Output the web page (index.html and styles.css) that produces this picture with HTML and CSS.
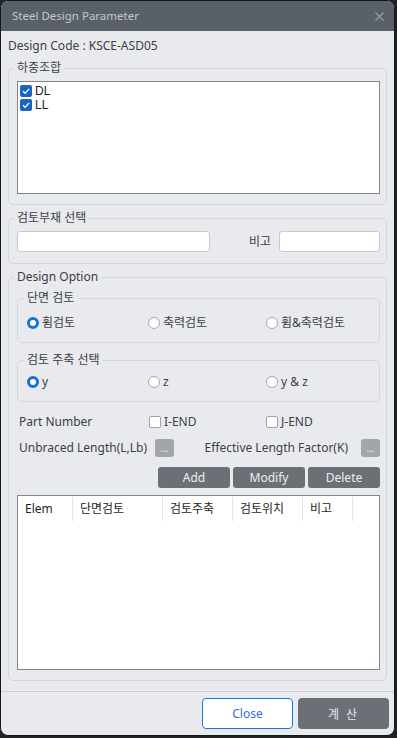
FILE: index.html
```html
<!DOCTYPE html>
<html lang="ko">
<head>
  <meta charset="UTF-8" />
  <meta name="viewport" content="width=device-width, initial-scale=1.0"/>
  <title>Steel Design Parameter</title>
  <link rel="stylesheet" href="styles.css">
</head>
<body>

  <div class="dialog">

    <div class="titlebar">
      <span class="title">Steel Design Parameter</span>
      <svg class="close-x" width="9" height="9" viewBox="0 0 9 9">
        <path d="M0.5 0.5L8.5 8.5M8.5 0.5L0.5 8.5" stroke="#9ba1a7" stroke-width="1.1" fill="none"/>
      </svg>
    </div>

    <div class="content">
      <div class="design-code">Design Code : KSCE-ASD05</div>

      <!-- load combinations -->
      <fieldset class="group">
        <legend>하중조합</legend>
        <div class="listbox">
          <div class="list-item">
            <span class="check on">
              <svg width="12" height="12" viewBox="0 0 12 12"><path d="M3 6.2L5.2 8.3L9.2 3.9" stroke="#fff" stroke-width="1.3" fill="none"/></svg>
            </span>
            DL
          </div>
          <div class="list-item">
            <span class="check on">
              <svg width="12" height="12" viewBox="0 0 12 12"><path d="M3 6.2L5.2 8.3L9.2 3.9" stroke="#fff" stroke-width="1.3" fill="none"/></svg>
            </span>
            LL
          </div>
        </div>
      </fieldset>

      <!-- member selection -->
      <fieldset class="group member-group">
        <legend>검토부재 선택</legend>
        <div class="member-row">
          <input class="text-input member-input" type="text">
          <span class="memo-label">비고</span>
          <input class="text-input memo-input" type="text">
        </div>
      </fieldset>

      <!-- design option -->
      <fieldset class="group option-group">
        <legend>Design Option</legend>

        <fieldset class="subgroup">
          <legend>단면 검토</legend>
          <div class="radio-row">
            <span class="radio-item"><span class="radio on"></span>휨검토</span>
            <span class="radio-item"><span class="radio"></span>축력검토</span>
            <span class="radio-item"><span class="radio"></span>휨&amp;축력검토</span>
          </div>
        </fieldset>

        <fieldset class="subgroup axis-group">
          <legend>검토 주축 선택</legend>
          <div class="radio-row">
            <span class="radio-item"><span class="radio on"></span>y</span>
            <span class="radio-item"><span class="radio"></span>z</span>
            <span class="radio-item"><span class="radio"></span>y &amp; z</span>
          </div>
        </fieldset>

        <div class="part-row">
          <span>Part Number</span>
          <span class="check-item"><span class="check"></span>I-END</span>
          <span class="check-item"><span class="check"></span>J-END</span>
        </div>

        <div class="length-row">
          <span>Unbraced Length(L,Lb)</span>
          <button class="dots-btn">...</button>
          <span class="k-label">Effective Length Factor(K)</span>
          <button class="dots-btn">...</button>
        </div>

        <div class="action-row">
          <button class="gray-btn">Add</button>
          <button class="gray-btn">Modify</button>
          <button class="gray-btn">Delete</button>
        </div>

        <div class="result-table">
          <div class="table-head">
            <span>Elem</span>
            <span>단면검토</span>
            <span>검토주축</span>
            <span>검토위치</span>
            <span>비고</span>
          </div>
        </div>
      </fieldset>
    </div>

    <div class="footer">
      <button class="close-btn">Close</button>
      <button class="calc-btn">계 산</button>
    </div>

  </div>

</body>
</html>
```

FILE: styles.css
```css
body {
  margin: 0;
  background-color: #1f2327;
  font-family: "Noto Sans", "Noto Sans CJK KR", sans-serif;
  font-size: 12px;
  line-height: 16px;
  color: #3b4047;
}

.dialog {
  width: 393px;
  height: 734px;
  border: 1px solid #15181b;
  border-radius: 8px;
  background-color: #e9eaed;
  overflow: hidden;
  display: flex;
  flex-direction: column;
}

.titlebar {
  height: 30px;
  flex-shrink: 0;
  background-color: #5a6068;
  display: flex;
  align-items: center;
  justify-content: space-between;
  padding: 0 10px 0 11px;
}

.title {
  color: #c3c7cc;
  font-size: 11.5px;
}

.content {
  padding: 7px 7px 0;
  display: flex;
  flex-direction: column;
}

.design-code {
  line-height: 16px;
  margin-bottom: 6px;
}

fieldset {
  margin: 0;
  min-width: 0;
  border: 1px solid #d3d6da;
  border-radius: 5px;
}

legend {
  line-height: 16px;
  padding: 0 3px;
  margin-left: -3px;
}

.group {
  padding: 5px 6px 10px 8px;
  margin-bottom: 5px;
}

.member-group {
  padding-bottom: 11px;
}

.listbox {
  box-sizing: border-box;
  height: 113px;
  background: #fff;
  border: 1px solid #80868d;
  padding: 2px;
}

.list-item {
  height: 14px;
  line-height: 14px;
  display: flex;
  align-items: center;
  gap: 3px;
  font-family: "Liberation Sans", sans-serif;
  color: #1d1f22;
}

.check {
  width: 10px;
  height: 10px;
  border: 1px solid #9da2a8;
  border-radius: 2px;
  background: #fff;
  display: inline-flex;
}

.check.on {
  width: 12px;
  height: 12px;
  border: none;
  background: #1b64c4;
}

.member-row {
  display: flex;
  align-items: center;
}

.text-input {
  box-sizing: border-box;
  height: 21px;
  border: 1px solid #c6cacf;
  border-radius: 3px;
  background: #fff;
  margin: 0;
}

.member-input {
  width: 193px;
}

.memo-label {
  margin-left: auto;
  margin-right: 8px;
}

.memo-input {
  width: 101px;
}

.option-group {
  padding-bottom: 10px;
  margin-bottom: 0;
}

.subgroup {
  padding: 9px 6px 11px 9px;
}

.axis-group {
  margin-top: 9px;
  padding-top: 6px;
}

.radio-row {
  display: grid;
  grid-template-columns: 121px 118px 1fr;
  height: 16px;
  align-items: center;
}

.radio-item,
.check-item {
  display: flex;
  align-items: center;
  gap: 3px;
}

.radio {
  box-sizing: border-box;
  width: 12px;
  height: 12px;
  border-radius: 50%;
  border: 1px solid #a4a9ae;
  background: #fff;
}

.radio.on {
  border: 3.5px solid #1a6fe0;
}

.part-row {
  display: grid;
  grid-template-columns: 130px 117px 1fr;
  padding-left: 2px;
  height: 20px;
  align-items: center;
  margin-top: 10px;
}

.length-row {
  display: flex;
  align-items: center;
  height: 20px;
  margin-top: 6px;
  padding-left: 2px;
}

.length-row > span:first-child {
  width: 136px;
}

.k-label {
  margin-left: auto;
  margin-right: 13px;
}

button {
  font-family: inherit;
  cursor: pointer;
}

.dots-btn {
  width: 19px;
  height: 18px;
  padding: 0;
  border: none;
  border-radius: 3px;
  background: #a2a6ab;
  color: #f2f3f4;
  font-size: 10px;
  line-height: 14px;
}

.action-row {
  display: flex;
  justify-content: flex-end;
  gap: 3px;
  margin-top: 9px;
}

.gray-btn {
  width: 72px;
  height: 21px;
  padding: 0;
  border: none;
  border-radius: 3px;
  background: #6b7077;
  color: #eceef0;
  font-size: 12px;
}

.result-table {
  box-sizing: border-box;
  margin-top: 7px;
  height: 175px;
  background: #fff;
  border: 1px solid #80868d;
}

.table-head {
  display: grid;
  grid-template-columns: 55px 90px 70px 70px 50px;
  margin-top: 1px;
  height: 24px;
  color: #1d1f22;
}

.table-head span {
  border-right: 1px solid #e2e4e7;
  padding-left: 7px;
  line-height: 24px;
}

.footer {
  margin-top: auto;
  border-top: 1px solid #c9ccd0;
  padding: 6px 5px 6px;
  display: flex;
  justify-content: flex-end;
  gap: 5px;
}

.close-btn,
.calc-btn {
  width: 91px;
  height: 31px;
  border-radius: 4px;
  font-size: 12px;
}

.close-btn {
  background: #fff;
  border: 1px solid #1a73e8;
  color: #2f6fe0;
}

.calc-btn {
  background: #6b7077;
  border: none;
  color: #e6e8ea;
  letter-spacing: 2px;
}
```
